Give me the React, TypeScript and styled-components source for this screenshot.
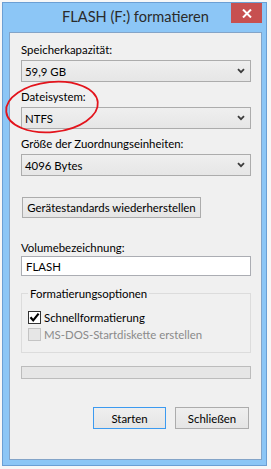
import React from "react";
import styled, { createGlobalStyle, css } from "styled-components";

const GlobalStyle = createGlobalStyle`
  html, body {
    margin: 0;
    padding: 0;
    background: #f7f7f7;
  }
  body {
    font-family: Lato, "Open Sans", sans-serif;
    font-size: 11.4px;
    color: #000;
  }
`;

function Chevron() {
  return (
    <svg width="8" height="6" viewBox="0 0 8 6">
      <path d="M1 1.2 L4 4.2 L7 1.2" fill="none" stroke="#3c3c3c" strokeWidth="1.8" />
    </svg>
  );
}

function ComboBox({ value }: { value: string }) {
  return (
    <Combo>
      <span>{value}</span>
      <Chevron />
    </Combo>
  );
}

function CheckOption({
  label,
  checked,
  disabled,
}: {
  label: string;
  checked?: boolean;
  disabled?: boolean;
}) {
  return (
    <CheckRow disabled={disabled}>
      <Box disabled={disabled}>
        {checked ? (
          <svg width="11" height="11" viewBox="0 0 11 11">
            <path d="M1.5 5.3 L4.2 8.4 L9.6 1.6" fill="none" stroke="#000" strokeWidth="2.2" />
          </svg>
        ) : null}
      </Box>
      <span>{label}</span>
    </CheckRow>
  );
}

export default function App() {
  return (
    <>
      <GlobalStyle />
      <Window>
        <TitleBar>
          <Title>FLASH (F:) formatieren</Title>
          <CloseButton>
            <svg width="10" height="9" viewBox="0 0 10 9">
              <path d="M1 0.5 L9 8.5 M9 0.5 L1 8.5" stroke="#fff" strokeWidth="2" />
            </svg>
          </CloseButton>
        </TitleBar>
        <Client>
          <Field>
            <Label>Speicherkapazität:</Label>
            <ComboBox value="59,9 GB" />
          </Field>
          <Field>
            <Label>Dateisystem:</Label>
            <ComboBox value="NTFS" />
          </Field>
          <Field>
            <Label>Größe der Zuordnungseinheiten:</Label>
            <ComboBox value="4096 Bytes" />
          </Field>
          <DefaultsButton>Gerätestandards wiederherstellen</DefaultsButton>
          <Field spaced>
            <Label>Volumebezeichnung:</Label>
            <TextInput>FLASH</TextInput>
          </Field>
          <Group>
            <Legend>Formatierungsoptionen</Legend>
            <CheckOption label="Schnellformatierung" checked />
            <CheckOption label="MS-DOS-Startdiskette erstellen" disabled />
          </Group>
          <Progress />
          <ButtonRow>
            <DialogButton primary>Starten</DialogButton>
            <DialogButton>Schließen</DialogButton>
          </ButtonRow>
          <Marker width="100" height="60" viewBox="0 0 100 60">
            <ellipse
              cx="48"
              cy="29"
              rx="46"
              ry="25"
              transform="rotate(-6 48 29)"
              fill="none"
              stroke="#e3141c"
              strokeWidth="1.8"
            />
          </Marker>
        </Client>
      </Window>
    </>
  );
}

const Window = styled.div`
  margin: 2px 0 0 2px;
  width: 265px;
  height: 464px;
  box-sizing: border-box;
  border: 1px solid #6b9fd4;
  background: #8cc6f6;
  padding: 0 4px 5px 6px;
  display: flex;
  flex-direction: column;
`;

const TitleBar = styled.div`
  height: 29px;
  flex: none;
  display: grid;
  grid-template-columns: 1fr auto 1fr;
  align-items: start;
`;

const Title = styled.div`
  grid-column: 2;
  font-size: 14.6px;
  line-height: 28px;
  color: #2b2b2b;
  white-space: nowrap;
`;

const CloseButton = styled.div`
  grid-column: 3;
  justify-self: end;
  width: 31px;
  height: 20px;
  background: #c75050;
  display: flex;
  align-items: center;
  justify-content: center;
`;

const Client = styled.div`
  flex: 1;
  position: relative;
  background: #f0f0f0;
  border: 1px solid #83a4c8;
  padding: 9px 10px 0 11px;
  display: flex;
  flex-direction: column;
`;

const Field = styled.div<{ spaced?: boolean }>(
  ({ spaced }) => css`
    display: flex;
    flex-direction: column;
    margin-bottom: 7px;
    ${spaced &&
    css`
      margin-top: 22px;
      margin-bottom: 0;
    `}
  `
);

const Label = styled.div`
  line-height: 15px;
  margin-bottom: 3px;
  white-space: nowrap;
`;

const Combo = styled.div`
  height: 22px;
  box-sizing: border-box;
  border: 1px solid #acacac;
  background: linear-gradient(#efefef, #e6e6e6);
  display: flex;
  align-items: center;
  justify-content: space-between;
  padding: 0 5px 0 3px;
`;

const DefaultsButton = styled.div`
  align-self: flex-start;
  margin: 14px 0 0 1px;
  width: 179px;
  height: 21px;
  box-sizing: border-box;
  border: 1px solid #acacac;
  background: linear-gradient(#efefef, #e5e5e5);
  display: flex;
  align-items: center;
  justify-content: center;
  white-space: nowrap;
`;

const TextInput = styled.div`
  margin-top: -2px;
  height: 20px;
  box-sizing: border-box;
  border: 1px solid #abadb3;
  background: #fff;
  padding-left: 4px;
  display: flex;
  align-items: center;
`;

const Group = styled.fieldset`
  margin: 10px 0 0;
  padding: 8px 6px 9px;
  border: 1px solid #dcdcdc;
  min-width: 0;
`;

const Legend = styled.legend`
  padding: 0 2px;
  line-height: 15px;
`;

const CheckRow = styled.div<{ disabled?: boolean }>(
  ({ disabled }) => css`
    height: 17px;
    display: flex;
    align-items: center;
    gap: 3px;
    color: ${disabled ? "#8a8a8a" : "#000"};
    white-space: nowrap;
  `
);

const Box = styled.div<{ disabled?: boolean }>(
  ({ disabled }) => css`
    width: 13px;
    height: 13px;
    box-sizing: border-box;
    border: 1px solid ${disabled ? "#c4c4c4" : "#333"};
    background: ${disabled ? "#e6e6e6" : "#fff"};
    display: flex;
    align-items: center;
    justify-content: center;
  `
);

const Progress = styled.div`
  margin-top: 13px;
  height: 13px;
  box-sizing: border-box;
  border: 1px solid #bcbcbc;
  background: #e6e6e6;
`;

const ButtonRow = styled.div`
  display: flex;
  justify-content: flex-end;
  gap: 9px;
  margin-top: 28px;
  padding-right: 2px;
`;

const DialogButton = styled.div<{ primary?: boolean }>(
  ({ primary }) => css`
    width: ${primary ? 73 : 74}px;
    height: 22px;
    box-sizing: border-box;
    border: 1px solid ${primary ? "#3c9af0" : "#acacac"};
    background: linear-gradient(#efefef, #e5e5e5);
    display: flex;
    align-items: center;
    justify-content: center;
  `
);

const Marker = styled.svg`
  position: absolute;
  left: -6px;
  top: 45px;
  pointer-events: none;
`;
